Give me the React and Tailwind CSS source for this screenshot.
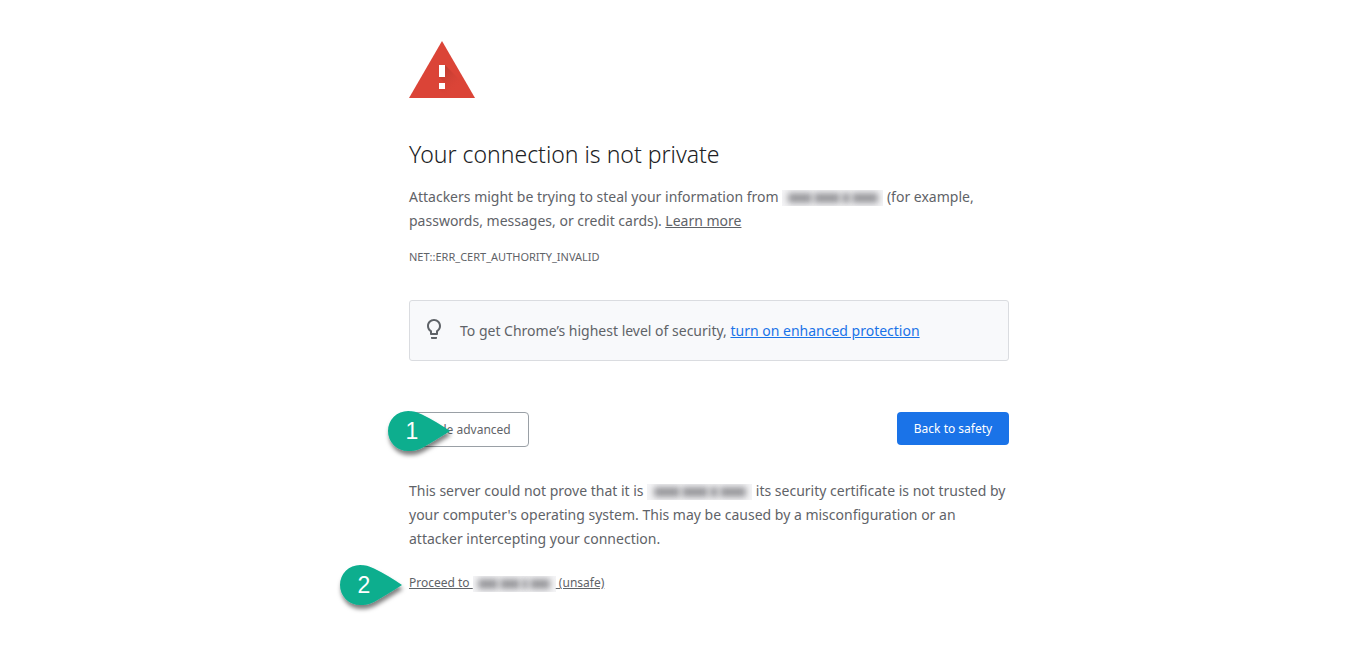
import React from "react";

function Redacted({ className, groups }) {
  return (
    <span
      role="img"
      aria-label="hidden address"
      className={`inline-flex items-center justify-center gap-0.5 overflow-hidden bg-[#f4f4f6] align-middle ${className}`}
    >
      {groups.map((width, i) => (
        <span key={i} className="h-2.5 bg-[#97979b] blur-[3px]" style={{ width }} />
      ))}
    </span>
  );
}

function Marker({ number, className }) {
  return (
    <svg
      className={`pointer-events-none absolute ${className}`}
      width="76"
      height="56"
      viewBox="0 0 76 56"
      role="img"
      aria-label={`Step ${number}`}
    >
      <defs>
        <filter id={`shadow-${number}`} x="-20%" y="-20%" width="150%" height="160%">
          <feDropShadow dx="1" dy="4" stdDeviation="2" floodColor="#000" floodOpacity="0.5" />
        </filter>
      </defs>
      <path
        d="M66 24 C57 30 48 35 38 41 C33 43.500 29 44 24 44 A20 20 0 0 1 24 4 C29 4 33 5 38 7.500 C48 12 57 18 66 24 Z"
        fill="#09ae8e"
        filter={`url(#shadow-${number})`}
      />
      <text
        x="28"
        y="32"
        textAnchor="middle"
        fontSize="23"
        fill="#fff"
        fontFamily="'Liberation Sans', sans-serif"
      >
        {number}
      </text>
    </svg>
  );
}

function WarningIcon() {
  return (
    <svg width="66" height="57" viewBox="0 0 66 57" role="img" aria-label="Warning">
      <defs>
        <linearGradient id="cast" gradientUnits="userSpaceOnUse" x1="33" y1="27" x2="51" y2="45">
          <stop offset="0" stopColor="#b93a2f" />
          <stop offset="1" stopColor="#db4437" stopOpacity="0" />
        </linearGradient>
      </defs>
      <path d="M33 0 L66 57 H0 Z" fill="#db4437" />
      <path d="M36 24 L54 42 V57 H39 L30 48 L36 42 L30 36 Z" fill="url(#cast)" />
      <path d="M30 24h6v12h-6zM30 42h6v6h-6z" fill="#fff" />
    </svg>
  );
}

function BulbIcon() {
  return (
    <svg className="shrink-0" width="24" height="24" viewBox="0 0 24 24" fill="#5f6368" aria-hidden="true">
      <path d="M9 21c0 .5.4 1 1 1h4c.6 0 1-.5 1-1v-1H9v1zm3-19C8.100 2 5 5.100 5 9c0 2.400 1.200 4.500 3 5.700V17c0 .5.4 1 1 1h6c.6 0 1-.5 1-1v-2.300c1.800-1.300 3-3.400 3-5.700 0-3.900-3.100-7-7-7zm2.900 11.100l-.9.600V16h-4v-2.300l-.9-.6C7.800 12.200 7 10.600 7 9c0-2.800 2.200-5 5-5s5 2.200 5 5c0 1.600-.8 3.200-2.100 4.100z" />
    </svg>
  );
}

export default function App() {
  return (
    <div className="min-h-screen bg-white pl-[73px] font-['Noto_Sans','Open_Sans',sans-serif] text-[14px] leading-6 text-[#5f6368]">
      <main className="mx-auto max-w-[600px] pt-[41px] pb-16">
        <WarningIcon />
        <h1 className="mt-10 text-[23px] leading-8 font-[350] text-[#202124]">Your connection is not private</h1>
        <p className="mt-[15px]">
          Attackers might be trying to steal your information from{" "}
          <Redacted className="h-4 w-[101px]" groups={[24, 26, 8, 26]} /> (for example, passwords, messages, or credit
          cards).{" "}
          <a href="#learn" className="underline">
            Learn more
          </a>
        </p>
        <p className="mt-3 text-[11px]">NET::ERR_CERT_AUTHORITY_INVALID</p>
        <section className="mt-[31px] flex items-start gap-3.5 rounded-[3px] border border-[#dadce0] bg-[#f8f9fb] px-3 pt-4 pb-[17px]">
          <BulbIcon />
          <p className="pt-0.5">
            To get Chrome’s highest level of security,{" "}
            <a href="#protection" className="text-[#1a73e8] underline">
              turn on enhanced protection
            </a>
          </p>
        </section>
        <div className="mt-[51px] flex items-start justify-between text-[12px]">
          <div className="relative">
            <button className="h-[35px] w-[120px] rounded-[4px] border border-[#9aa0a6] bg-white whitespace-nowrap">
              Hide advanced
            </button>
            <Marker number={1} className="-top-[5px] -left-[25px]" />
          </div>
          <button className="h-[33px] w-28 rounded-[4px] bg-[#1a73e8] whitespace-nowrap text-white">
            Back to safety
          </button>
        </div>
        <p className="mt-8">
          This server could not prove that it is <Redacted className="h-4 w-[105px]" groups={[26, 26, 8, 26]} /> its
          security certificate is not trusted by your computer's operating system. This may be caused by a
          misconfiguration or an attacker intercepting your connection.
        </p>
        <div className="relative mt-5 text-[12px]">
          <a href="#proceed" className="underline">
            Proceed to <Redacted className="h-4 w-[83px]" groups={[20, 20, 6, 20]} /> (unsafe)
          </a>
          <Marker number={2} className="-top-[10px] -left-[73px]" />
        </div>
      </main>
    </div>
  );
}
